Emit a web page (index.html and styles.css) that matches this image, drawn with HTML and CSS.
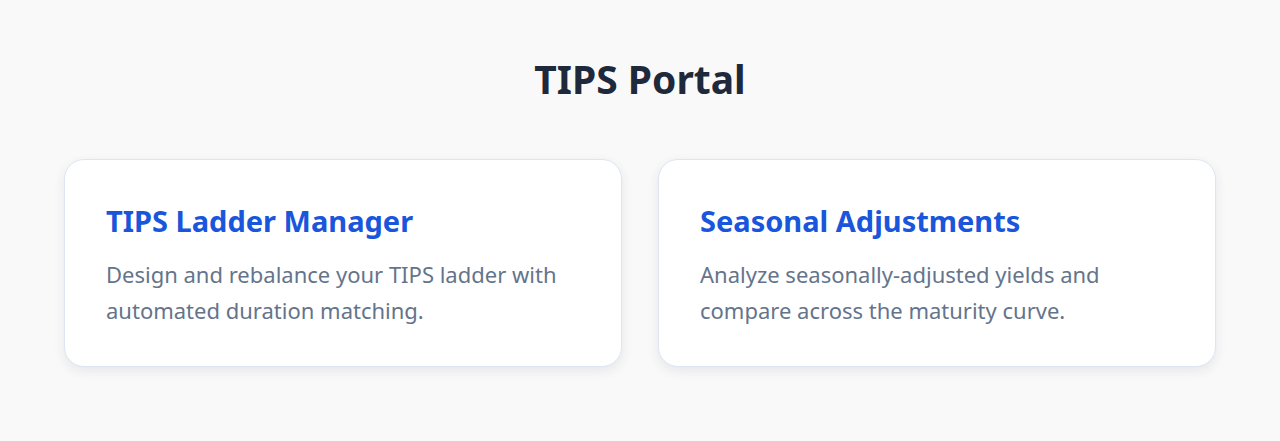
FILE: index.html
```html
<!DOCTYPE html>
<html lang="en">
<head>
<meta charset="utf-8">
<title>TIPS Portal</title>
<link rel="stylesheet" href="styles.css">
</head>
<body>
<main class="page">
  <h1 class="title">TIPS Portal</h1>
  <div class="cards">
    <section class="card">
      <h2 class="card-title">TIPS Ladder Manager</h2>
      <p class="card-text">Design and rebalance your TIPS ladder with automated duration matching.</p>
    </section>
    <section class="card">
      <h2 class="card-title">Seasonal Adjustments</h2>
      <p class="card-text">Analyze seasonally-adjusted yields and compare across the maturity curve.</p>
    </section>
  </div>
</main>
</body>
</html>
```

FILE: styles.css
```css
* { box-sizing: border-box; }
html, body {
  margin: 0;
  padding: 0;
  background: #f9f9fa;
  font-family: "Noto Sans", "Open Sans", sans-serif;
}
.page {
  max-width: 1152px;
  margin: 0 auto;
  padding: 51px 0 40px;
}
.title {
  margin: 0 0 52px;
  text-align: center;
  font-size: 39px;
  line-height: 56px;
  font-weight: 700;
  color: #1e293b;
}
.cards {
  display: grid;
  grid-template-columns: 1fr 1fr;
  gap: 36px;
}
.card {
  background: #ffffff;
  border: 1px solid #dfe5f0;
  border-radius: 20px;
  padding: 43px 41px 0;
  height: 208px;
  box-shadow: 0 4px 12px rgba(30, 41, 59, 0.09);
}
.card-title {
  margin: 0 0 17px;
  font-size: 29px;
  line-height: 36px;
  font-weight: 700;
  color: #1a56db;
}
.card-text {
  margin: 0;
  font-size: 22px;
  line-height: 36px;
  color: #64748b;
}
```
